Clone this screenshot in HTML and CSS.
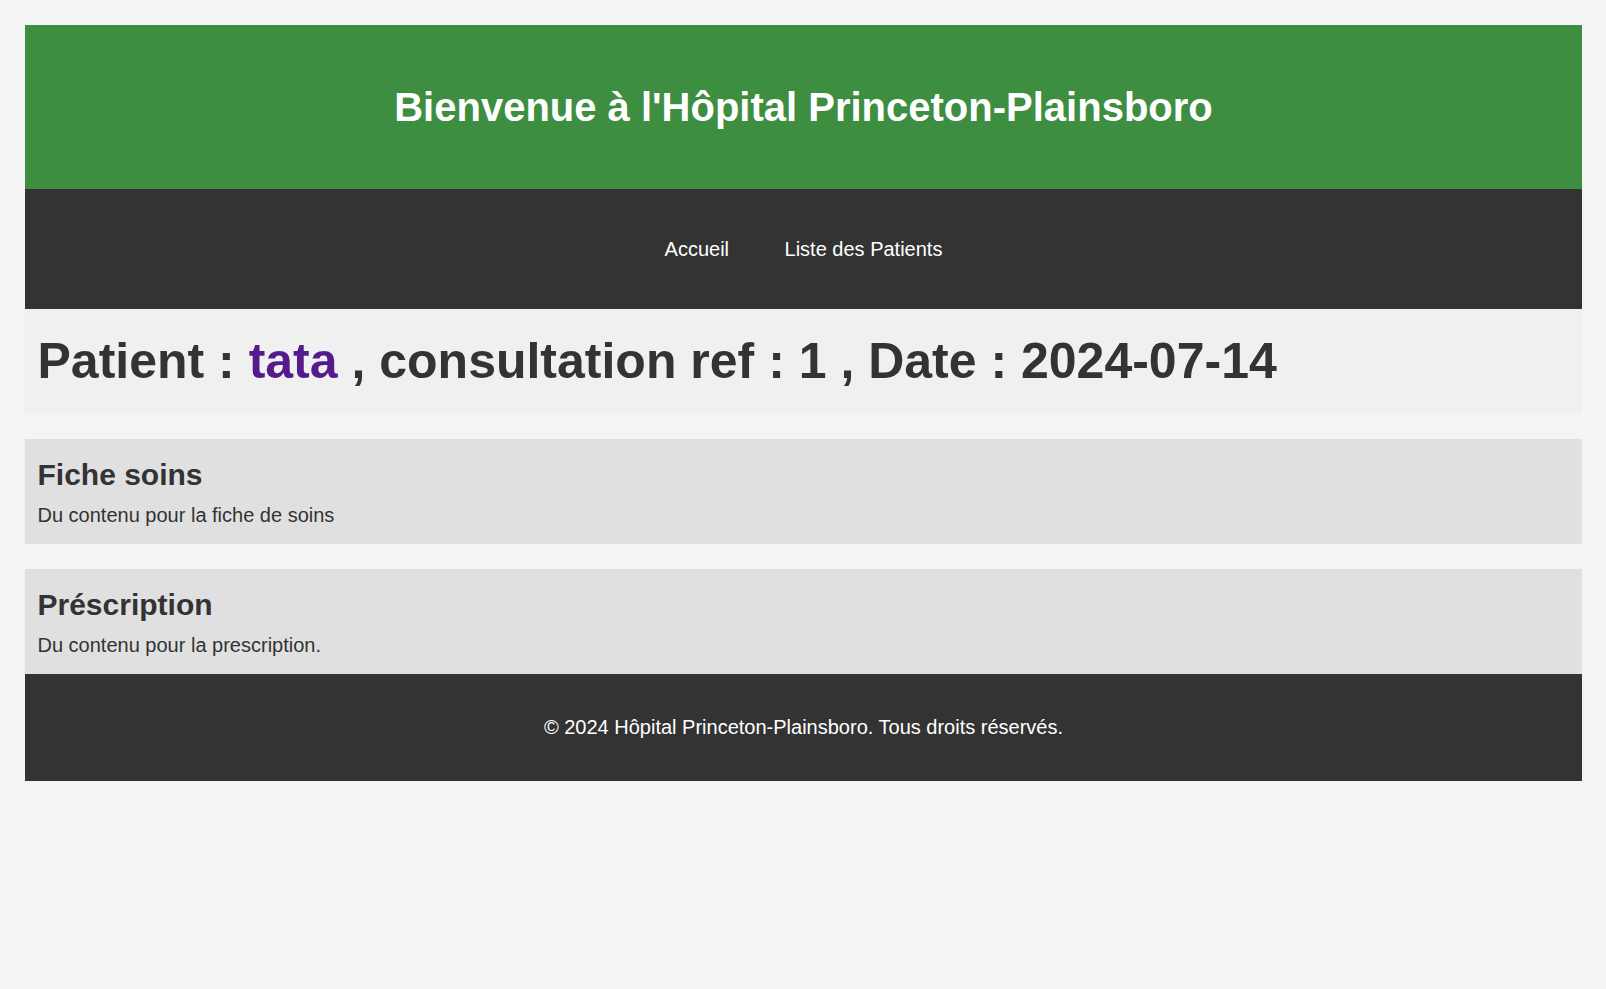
FILE: index.html
```html
<!DOCTYPE html>
<html lang="fr">
<head>
<meta charset="utf-8">
<title>Consultation</title>
<link rel="stylesheet" href="styles.css">
</head>
<body>
<div class="page">
  <header class="site-header">
    <h1 class="site-title">Bienvenue à l'Hôpital Princeton-Plainsboro</h1>
  </header>
  <nav class="site-nav">
    <a class="nav-link" href="#">Accueil</a>
    <a class="nav-link" href="#">Liste des Patients</a>
  </nav>
  <section class="patient-bar">
    <h1 class="patient-title">Patient : <a class="patient-link" href="#">tata</a> , consultation ref : 1 , Date : 2024-07-14</h1>
  </section>
  <main class="cards">
    <section class="card">
      <h2 class="card-title">Fiche soins</h2>
      <p class="card-text">Du contenu pour la fiche de soins</p>
    </section>
    <section class="card">
      <h2 class="card-title">Préscription</h2>
      <p class="card-text">Du contenu pour la prescription.</p>
    </section>
  </main>
  <footer class="site-footer">
    <p class="footer-text">© 2024 Hôpital Princeton-Plainsboro. Tous droits réservés.</p>
  </footer>
</div>
</body>
</html>
```
FILE: styles.css
```css
html, body {
  margin: 0;
  padding: 0;
}
body {
  background: #f4f4f4;
  font-family: "Liberation Sans", Arial, sans-serif;
  color: #333;
}
.page {
  padding: 25px 24px 25px 25px;
  display: flex;
  flex-direction: column;
}
.site-header {
  background: #3e8e41;
  color: #fff;
  padding: 59px 12.5px;
  text-align: center;
}
.site-title {
  margin: 0;
  font-size: 40px;
  line-height: 46px;
  font-weight: bold;
}
.site-nav {
  background: #333;
  padding: 48.5px 12.5px;
  display: flex;
  justify-content: center;
  gap: 55.5px;
}
.nav-link {
  color: #fff;
  text-decoration: none;
  font-size: 20px;
  line-height: 23px;
}
.patient-bar {
  background: #f0f0f0;
  padding: 24px 12.5px 23.5px;
}
.patient-title {
  margin: 0;
  font-size: 50px;
  line-height: 57.5px;
  font-weight: bold;
  color: #333;
}
.patient-link {
  color: #551a8b;
  text-decoration: none;
}
.cards {
  display: flex;
  flex-direction: column;
  gap: 25px;
  margin-top: 25px;
}
.card {
  background: #e0e0e0;
  padding: 19px 12.5px 17.5px;
}
.card-title {
  margin: 0 0 11px;
  font-size: 30px;
  line-height: 34.5px;
  font-weight: bold;
}
.card-text {
  margin: 0;
  font-size: 20px;
  line-height: 23px;
}
.site-footer {
  background: #333;
  color: #fff;
  padding: 42px 12.5px;
  text-align: center;
}
.footer-text {
  margin: 0;
  font-size: 20px;
  line-height: 23px;
}
```
